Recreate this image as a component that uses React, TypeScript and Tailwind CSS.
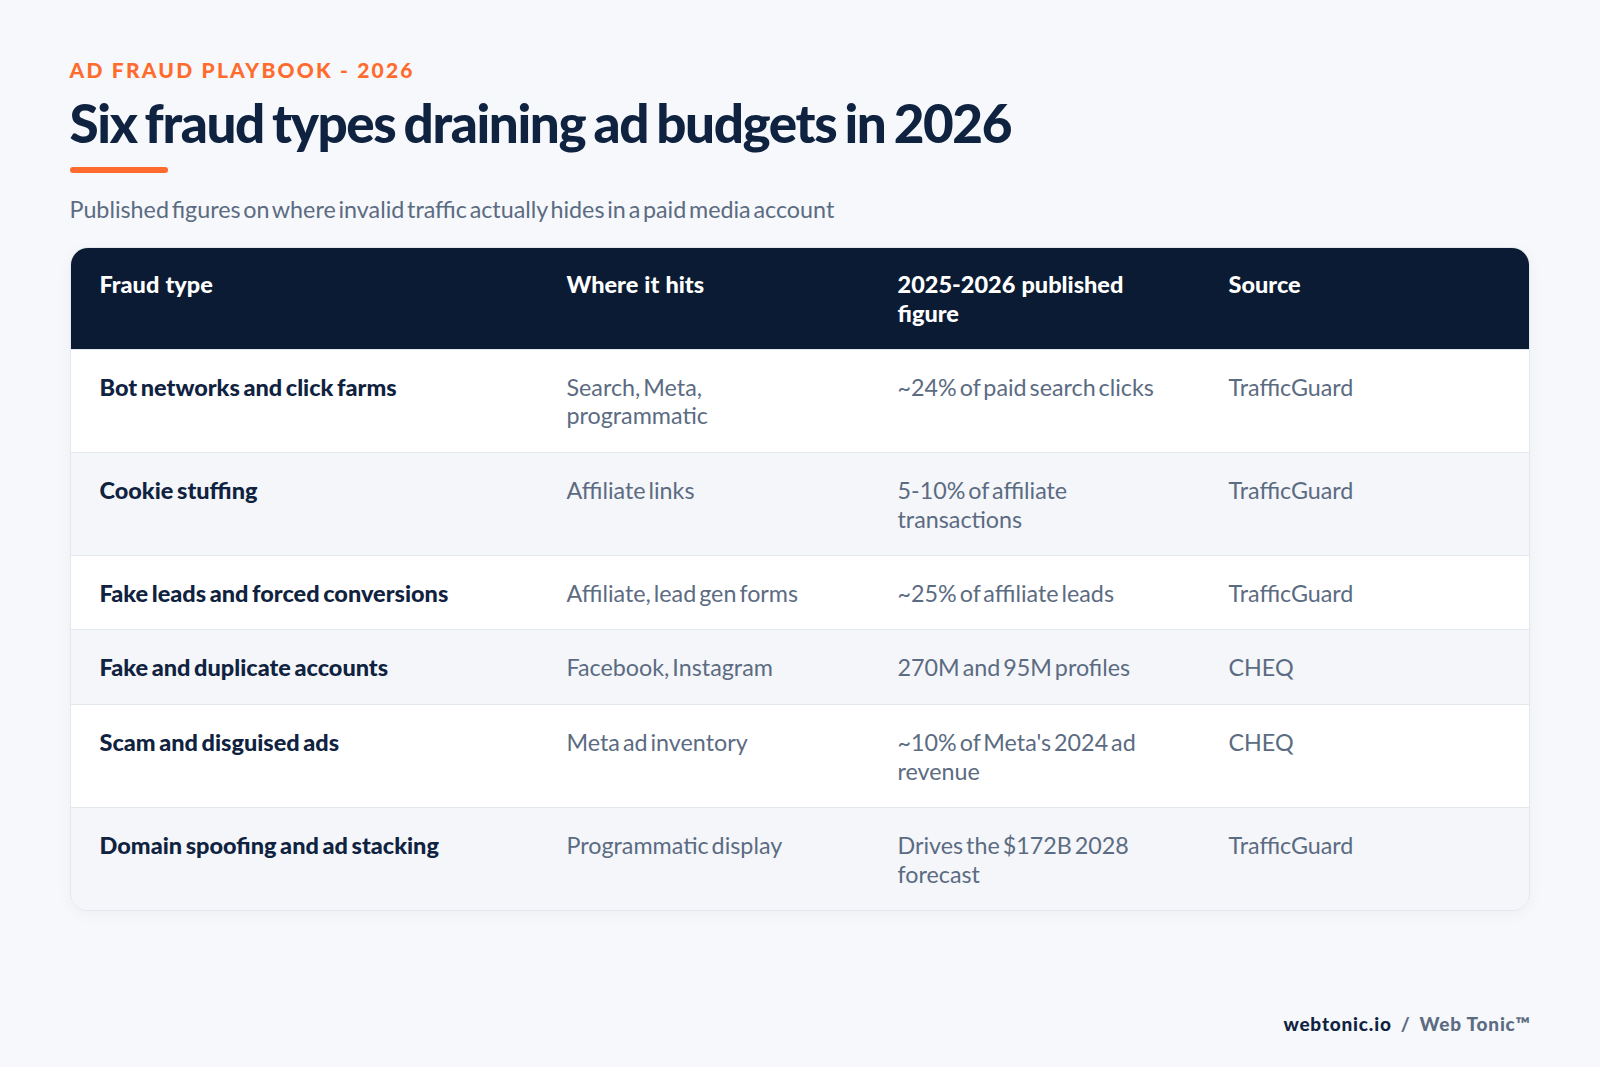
const headers = ['Fraud type', 'Where it hits', '2025-2026 published figure', 'Source'];

const rows = [
  ['Bot networks and click farms', 'Search, Meta, programmatic', '~24% of paid search clicks', 'TrafficGuard'],
  ['Cookie stuffing', 'Affiliate links', '5-10% of affiliate transactions', 'TrafficGuard'],
  ['Fake leads and forced conversions', 'Affiliate, lead gen forms', '~25% of affiliate leads', 'TrafficGuard'],
  ['Fake and duplicate accounts', 'Facebook, Instagram', '270M and 95M profiles', 'CHEQ'],
  ['Scam and disguised ads', 'Meta ad inventory', "~10% of Meta's 2024 ad revenue", 'CHEQ'],
  ['Domain spoofing and ad stacking', 'Programmatic display', 'Drives the $172B 2028 forecast', 'TrafficGuard'],
];

export default function App() {
  return (
    <div className="flex h-[1067px] w-[1600px] flex-col bg-[#f6f8fb] px-[69.5px] pt-[56px] font-['Lato',sans-serif]">
      <div className="text-[21px] leading-[28px] font-black tracking-[2.2px] text-[#ff6b2c]">AD FRAUD PLAYBOOK - 2026</div>
      <h1 className="mt-[6px] text-[53px] leading-[66px] font-black tracking-[-1.4px] [word-spacing:-3px] text-[#0f2240]">
        Six fraud types draining ad budgets in 2026
      </h1>
      <div className="mt-[11px] h-[6px] w-[98px] rounded-full bg-[#ff6b2c]" />
      <p className="mt-[20px] text-[23.3px] leading-[32px] [word-spacing:-3.2px] text-[#5b6b82]">
        Published figures on where invalid traffic actually hides in a paid media account
      </p>

      <div className="mt-[22px] w-[1460px] overflow-hidden rounded-[18px] border border-[#e3e8ef] bg-white shadow-[0_4px_16px_rgba(11,27,51,0.04)]">
        <table className="w-full table-fixed border-collapse text-left text-[23.3px] leading-[28.8px] [word-spacing:-3px]">
          <colgroup>
            <col className="w-[467px]" />
            <col className="w-[331px]" />
            <col className="w-[331px]" />
            <col />
          </colgroup>
          <thead>
            <tr className="bg-[#0b1b33]">
              {headers.map((h) => (
                <th key={h} className="px-[29px] pt-[22px] pb-[21px] align-top text-[23.5px] font-black [word-spacing:0.5px] text-white">
                  {h}
                </th>
              ))}
            </tr>
          </thead>
          <tbody>
            {rows.map((row, i) => (
              <tr key={row[0]} className={`border-t border-[#e3e8ef] ${i % 2 === 1 ? 'bg-[#f4f6fa]' : 'bg-white'}`}>
                {row.map((cell, j) => (
                  <td
                    key={j}
                    className={`px-[29px] pt-[23px] pb-[21.6px] align-top ${j === 0 ? 'text-[23.5px] font-black [word-spacing:-2px] text-[#0f2240]' : 'text-[#5b6b82]'}`}
                  >
                    {cell}
                  </td>
                ))}
              </tr>
            ))}
          </tbody>
        </table>
      </div>

      <div className="mt-auto mb-[29px] text-right text-[19px] leading-[28px] font-black tracking-[0.8px]">
        <span className="text-[#0f2240]">webtonic.io</span>
        <span className="mx-[9px] text-[#5b6b82]">/</span>
        <span className="text-[#5b6b82]">Web Tonic™</span>
      </div>
    </div>
  );
}
